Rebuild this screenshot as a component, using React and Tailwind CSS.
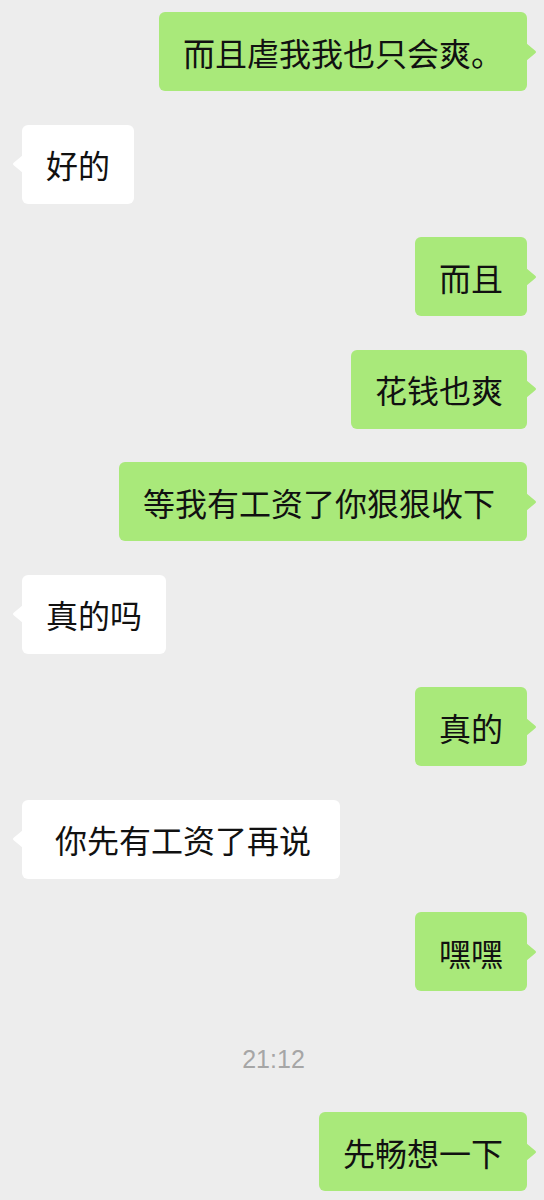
import React from "react";

const messages = [
  { me: true, text: "而且虐我我也只会爽。" },
  { me: false, text: "好的" },
  { me: true, text: "而且" },
  { me: true, text: "花钱也爽" },
  { me: true, text: "等我有工资了你狠狠收下", pad: "pl-6 pr-[32px]" },
  { me: false, text: "真的吗" },
  { me: true, text: "真的" },
  { me: false, text: "你先有工资了再说", pad: "pl-[33px] pr-[29px]" },
  { me: true, text: "嘿嘿" },
  { time: "21:12" },
  { me: true, text: "先畅想一下" },
];

const Tail = ({ me }) => (
  <svg
    width="11"
    height="18"
    viewBox="0 0 11 18"
    className={
      me
        ? "absolute top-1/2 -translate-y-1/2 right-[-10px]"
        : "absolute top-1/2 -translate-y-1/2 left-[-10px] -scale-x-100"
    }
  >
    <path
      d="M0 0 L9 7.5 Q11 9 9 10.5 L0 18 Z"
      fill={me ? "#a9e97a" : "#ffffff"}
    />
  </svg>
);

const Bubble = ({ me, text, pad }) => (
  <div className={me ? "flex justify-end" : "flex justify-start"}>
    <div
      className={
        (me ? "bg-[#a9e97a]" : "bg-white") +
        " " +
        (pad || "px-6") +
        " relative h-[79px] flex items-center rounded-[6px] text-[32px] text-[#111111] whitespace-pre"
      }
    >
      {text}
      <Tail me={me} />
    </div>
  </div>
);

export default function App() {
  return (
    <div
      className="w-[544px] h-[1200px] bg-[#ededed] pt-3 pl-[22px] pr-[17px] overflow-hidden"
      style={{ fontFamily: '"Noto Sans CJK SC", "Noto Sans", sans-serif' }}
    >
      <div className="flex flex-col gap-[33.5px]">
        {messages.map((m, i) =>
          m.time ? (
            <div
              key={i}
              className="text-center text-[25px] leading-[24px] text-[#a6a6a6] mt-[22px] mb-[8px] pr-[2px]"
              style={{ fontFamily: '"Liberation Sans", Arial, sans-serif' }}
            >
              {m.time}
            </div>
          ) : (
            <Bubble key={i} me={m.me} text={m.text} pad={m.pad} />
          )
        )}
      </div>
    </div>
  );
}
